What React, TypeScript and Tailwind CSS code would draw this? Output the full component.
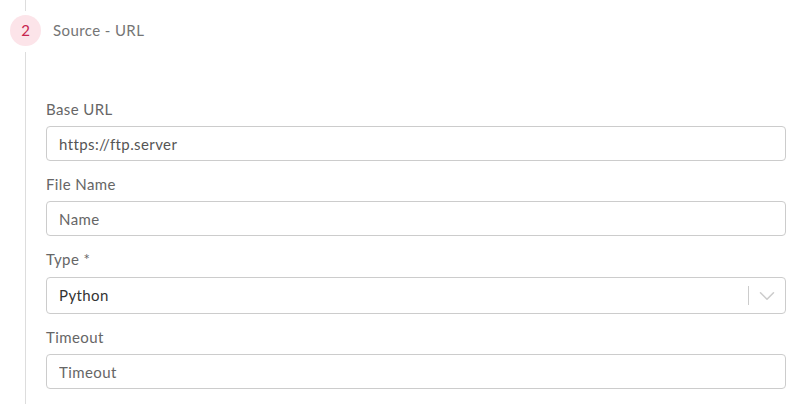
import { ChevronDown } from "lucide-react";

interface FieldProps {
  label: string;
  value?: string;
  placeholder?: string;
}

function TextField({ label, value, placeholder }: FieldProps) {
  return (
    <div className="mb-[13px]">
      <label className="block text-[15px] leading-[20px] tracking-[0.4px] text-[#666]">{label}</label>
      <input
        readOnly
        defaultValue={value}
        placeholder={placeholder}
        className="mt-[7px] block h-[35px] w-full rounded-[4px] border border-[#ccc] bg-white px-[12px] text-[15px] tracking-[0.4px] text-[#555] outline-none placeholder:text-[#666]"
      />
    </div>
  );
}

function SelectField({ label, value }: FieldProps) {
  return (
    <div className="mb-[13px]">
      <label className="block text-[15px] leading-[20px] tracking-[0.4px] text-[#666]">{label}</label>
      <div className="mt-[8px] flex h-[37px] w-full items-center rounded-[4px] border border-[#ccc] bg-white">
        <span className="flex-1 pl-[12px] text-[15px] tracking-[0.4px] text-[#333]">{value}</span>
        <span className="h-[19px] w-px bg-[#ccc]" />
        <span className="flex w-[36px] items-center justify-center text-[#ccc]">
          <ChevronDown size={26} strokeWidth={1.4} />
        </span>
      </div>
    </div>
  );
}

export default function App() {
  return (
    <div className="h-[404px] w-[802px] overflow-hidden bg-white font-['Lato','Open_Sans',sans-serif]">
      {/* step header */}
      <div className="ml-[25px] h-[11px] w-px bg-[#ddd]" />
      <div className="mt-[4px] flex items-center pl-[10px]">
        <div className="flex h-[31px] w-[31px] items-center justify-center rounded-full bg-[#fce4e9] text-[15px] text-[#c7254e]">
          2
        </div>
        <span className="ml-[12px] text-[15px] tracking-[0.4px] text-[#757575]">Source - URL</span>
      </div>

      {/* step body */}
      <div className="ml-[25px] mt-[6px] border-l border-[#ddd] pb-[20px] pl-[20px] pr-[16px] pt-[47px]">
        <TextField label="Base URL" value="https://ftp.server" />
        <TextField label="File Name" placeholder="Name" />
        <SelectField label="Type *" value="Python" />
        <TextField label="Timeout" placeholder="Timeout" />
      </div>
    </div>
  );
}
